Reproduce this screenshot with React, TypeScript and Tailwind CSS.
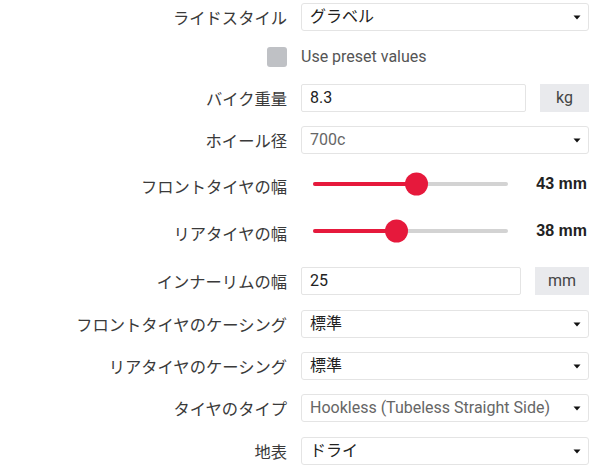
import React from 'react';

const jp = { fontFamily: '"Noto Sans CJK JP", "Noto Sans", sans-serif' };
const ui = { fontFamily: 'Roboto, "Noto Sans CJK JP", sans-serif' };

const Caret: React.FC = () => (
  <svg width="8" height="5" viewBox="0 0 8 5" className="shrink-0">
    <path d="M0.5 0.5 L7.5 0.5 L4 4.5 Z" fill="#111" />
  </svg>
);

const Row: React.FC<{ label?: React.ReactNode; className?: string; labelClass?: string; children: React.ReactNode }> = ({
  label,
  className = '',
  labelClass = '',
  children,
}) => (
  <div className={`flex items-center h-[28px] ${className}`}>
    <div className={`w-[287px] shrink-0 flex justify-end text-[16.3px] text-[#3a3a3a] leading-none ${labelClass}`} style={jp}>
      {label}
    </div>
    <div className="ml-[14px] w-[288px] h-full flex items-center">{children}</div>
  </div>
);

const Select: React.FC<{ value: string; muted?: boolean }> = ({ value, muted }) => (
  <div
    className="w-full h-full flex items-center justify-between border border-[#e4e4e4] rounded-[3px] bg-white pl-[8px] pr-[7px]"
    style={ui}
  >
    <span className={`text-[16px] ${muted ? 'text-[#666]' : 'text-[#222]'}`}>{value}</span>
    <Caret />
  </div>
);

const UnitInput: React.FC<{ value: string; unit: string; unitW: string }> = ({ value, unit, unitW }) => (
  <div className="w-full h-full flex items-center gap-[14px]" style={ui}>
    <div className="flex-1 h-full flex items-center border border-[#e4e4e4] rounded-[2px] px-[8px] text-[16px] text-[#222]">
      {value}
    </div>
    <div className={`h-full flex items-center justify-center bg-[#e9eaed] text-[16px] text-[#444] ${unitW}`}>{unit}</div>
  </div>
);

const Slider: React.FC<{ value: number; min: number; max: number }> = ({ value, min, max }) => {
  const trackW = 195;
  const thumb = 23;
  const center = thumb / 2 + ((value - min) / (max - min)) * (trackW - thumb);
  return (
    <div className="w-full h-full flex items-center pl-[12px]">
      <div className="relative w-[195px] h-[4px] rounded-full bg-[#d3d3d3]">
        <div className="absolute left-0 top-0 h-full rounded-full bg-[#e6193c]" style={{ width: center }} />
        <div
          className="absolute top-1/2 -translate-y-1/2 w-[23px] h-[23px] rounded-full bg-[#e6193c]"
          style={{ left: center - thumb / 2 }}
        />
      </div>
      <div
        className="flex-1 text-right pr-[2px] text-[16px] font-bold text-[#222]"
        style={{ fontFamily: '"Liberation Sans", Arial, sans-serif' }}
      >
        {value} mm
      </div>
    </div>
  );
};

export default function App() {
  return (
    <div className="w-[604px] h-[472px] bg-white overflow-hidden pt-[3px] flex flex-col">
      <Row label="ライドスタイル">
        <Select value="グラベル" />
      </Row>

      <div className="flex items-center h-[20px] mt-[16px]">
        <div className="w-[287px] shrink-0 flex justify-end">
          <div className="w-[20px] h-[20px] rounded-[3px] bg-[#bfc1c5]" />
        </div>
        <div className="ml-[14px] text-[16px] text-[#555]" style={ui}>
          Use preset values
        </div>
      </div>

      <Row label="バイク重量" className="mt-[17px]">
        <UnitInput value="8.3" unit="kg" unitW="w-[49px]" />
      </Row>

      <Row label="ホイール径" className="mt-[14px]">
        <Select value="700c" muted />
      </Row>

      <Row label="フロントタイヤの幅" className="mt-[16px]" labelClass="pt-[4px]">
        <Slider value={43} min={20} max={63} />
      </Row>

      <Row label="リアタイヤの幅" className="mt-[19px]" labelClass="pt-[4px]">
        <Slider value={38} min={20} max={63} />
      </Row>

      <Row label="インナーリムの幅" className="mt-[22px]">
        <UnitInput value="25" unit="mm" unitW="w-[54px]" />
      </Row>

      <Row label="フロントタイヤのケーシング" className="mt-[15px]">
        <Select value="標準" />
      </Row>

      <Row label="リアタイヤのケーシング" className="mt-[14px]">
        <Select value="標準" />
      </Row>

      <Row label="タイヤのタイプ" className="mt-[14px]">
        <Select value="Hookless (Tubeless Straight Side)" muted />
      </Row>

      <Row label="地表" className="mt-[15px]">
        <Select value="ドライ" />
      </Row>
    </div>
  );
}
